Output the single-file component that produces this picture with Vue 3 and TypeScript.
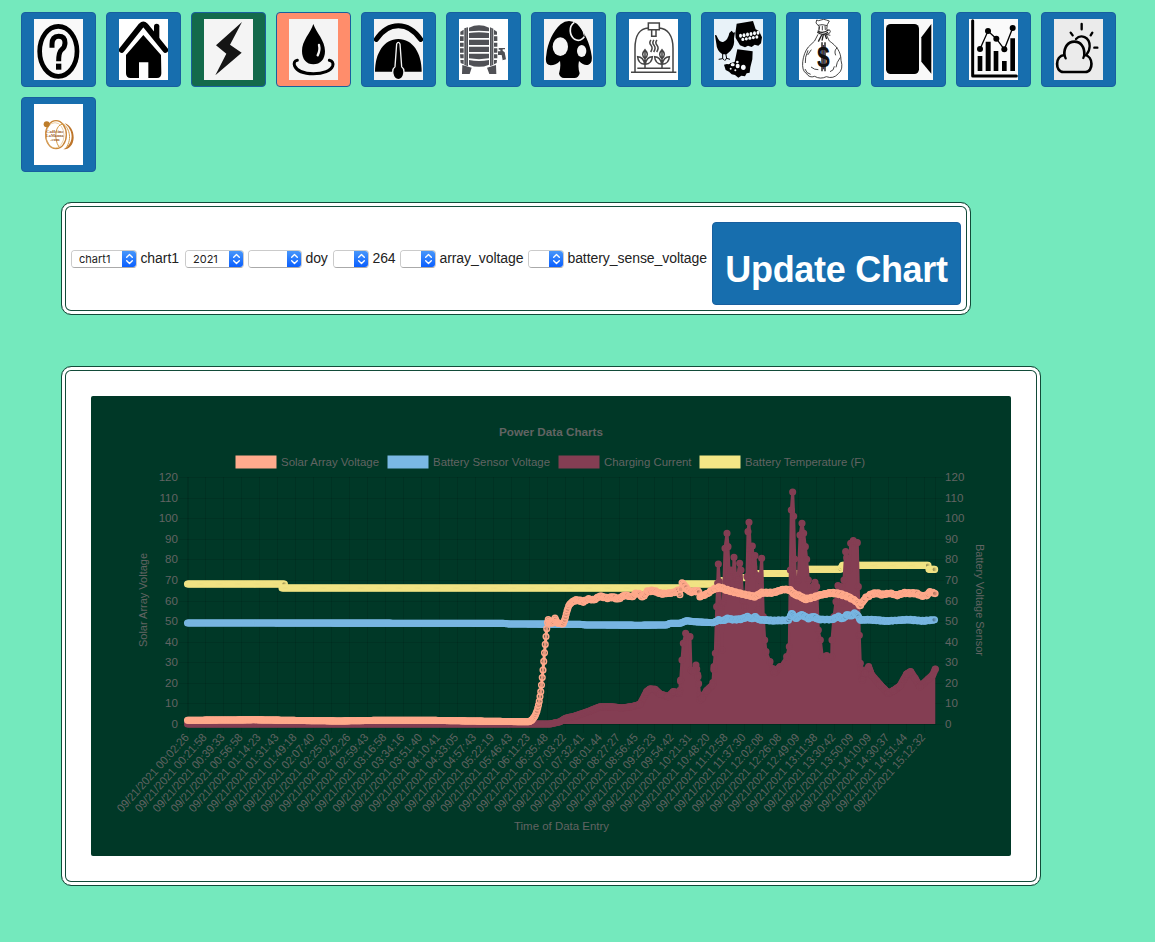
<script setup lang="ts">
type Pt = [number, number]

const tiles = ['help', 'home', 'power', 'water', 'gauge', 'barrel', 'mushroom', 'greenhouse', 'eggs', 'money', 'camera', 'stats', 'weather', 'caffeine']

const controls = [
  { value: 'chart1', size: 's66', label: 'chart1', text: 'w44' },
  { value: '2021', size: 's59', label: '', text: 'w0' },
  { value: '', size: 's54', label: 'doy', text: 'w27' },
  { value: '', size: 's36', label: '264', text: 'w27' },
  { value: '', size: 's36', label: 'array_voltage', text: 'w88' },
  { value: '', size: 's36', label: 'battery_sense_voltage', text: 'w144' },
]

const times = ['00:02:26', '00:21:58', '00:39:33', '00:56:58', '01:14:23', '01:31:43', '01:49:18', '02:07:40', '02:25:02', '02:42:26', '02:59:43', '03:16:58', '03:34:16', '03:51:40', '04:10:41', '04:33:05', '04:57:43', '05:22:19', '05:46:43', '06:11:23', '06:35:48', '07:03:22', '07:32:41', '08:01:44', '08:27:27', '08:56:45', '09:25:23', '09:54:42', '10:21:31', '10:48:20', '11:12:58', '11:37:30', '12:02:08', '12:26:08', '12:49:09', '13:11:38', '13:30:42', '13:50:09', '14:10:09', '14:30:37', '14:51:44', '15:12:32']
const ticks = times.map((t, i) => ({ label: '09/21/2021 ' + t, x: 188 + i * 17.96 }))
const levels = Array.from({ length: 13 }, (_, i) => ({ v: i * 10, y: 724 - i * 20.58 }))

const legend = [
  { name: 'Solar Array Voltage', x: 235, w: 98, c: '#ffab8d' },
  { name: 'Battery Sensor Voltage', x: 387, w: 117, c: '#7ab8e4' },
  { name: 'Charging Current', x: 558, w: 87.5, c: '#843e53' },
  { name: 'Battery Temperature (F)', x: 699, w: 120, c: '#f4e886' },
]

// Late-morning samples are stored in thirds of a pixel from (640, 470).
const fine = (list: Pt[]): Pt[] => list.map(([x, y]) => [640 + x / 3, 470 + y / 3])

const temperature: Pt[] = [
  [187.5, 584], [281, 584], [285, 584], [282, 588], [682, 588], [684, 584], [720, 584], [722, 580.5], [736, 580.5], [737, 577.6], [751, 577.6], [757, 573.5],
  [801, 573.5], [803, 569.3], [841, 569.3], [842, 565.4], [928, 565.4], [929, 569.4], [935.3, 569.4],
]
const battery: Pt[] = [
  [187.5, 623], [420, 623.2], [504, 623.4], [509, 624], [580, 624.3], [586, 625], [640, 625.2],
  ...fine([[80, 465], [90, 460], [120, 460], [140, 452], [160, 455], [220, 458], [235, 450], [250, 452], [262, 445], [280, 449], [305, 447], [323, 440], [334, 447], [346, 440], [356, 449], [400, 452], [445, 451], [456, 428], [466, 446], [485, 434], [505, 445], [522, 440], [535, 448], [575, 449], [595, 440], [608, 446], [622, 434], [635, 438], [643, 430], [652, 434], [660, 450], [690, 449], [740, 453], [805, 449], [850, 453], [886, 449]]),
]
const solar: Pt[] = [
  [187.5, 720.3], [255, 719.8], [300, 720.5], [340, 721], [385, 720.2], [430, 720.3], [470, 721], [529, 721.8], [532, 720], [535, 716], [537, 711], [539, 703], [541, 690], [543, 670], [545, 647], [547, 626],
  [548, 619], [550, 623], [553, 623], [555, 618], [557, 623], [563, 624], [565, 619], [567, 611], [569, 605], [573, 601], [578, 600], [583, 602], [588, 599], [594, 600], [600, 596], [607, 598], [613, 597], [618, 599], [625, 595], [632, 597], [636, 593],
  ...fine([[0, 373], [4, 380], [13, 377], [20, 365], [40, 362], [65, 372], [80, 370], [100, 368], [115, 361], [120, 375], [127, 335], [135, 350], [150, 366], [175, 362], [180, 380], [200, 372], [220, 358], [240, 352], [260, 360], [290, 368], [320, 375], [345, 380], [365, 368], [400, 368], [430, 358], [450, 360], [465, 374], [480, 378], [495, 388], [520, 382], [540, 375], [575, 368], [600, 372], [625, 380], [650, 395], [660, 408], [675, 385], [695, 372], [710, 369], [725, 374], [750, 370], [772, 376], [790, 369], [830, 370], [845, 378], [861, 376], [870, 365], [886, 371]]),
]
const current: Pt[] = [
  [187.5, 724], [550, 724], [560, 721.8], [565, 718.5], [575, 716], [587, 712], [600, 706.8], [612, 706.8], [622, 708], [632, 706.5],
  ...fine([[0, 703], [20, 665], [30, 657], [45, 658], [60, 672], [85, 680], [100, 665], [118, 670], [122, 630], [126, 570], [130, 520], [137, 490], [150, 500], [153, 600], [160, 605], [168, 585], [174, 620], [180, 690], [186, 685], [200, 662], [218, 645], [222, 590], [226, 550], [230, 410], [233, 340], [235, 282], [238, 335], [242, 410], [246, 540], [250, 400], [255, 235], [261, 190], [264, 230], [268, 320], [273, 300], [278, 360], [282, 262], [287, 320], [292, 330], [299, 280], [303, 300], [308, 390], [315, 410], [321, 320], [324, 185], [327, 157], [331, 240], [337, 228], [341, 290], [345, 257], [349, 315], [354, 420], [360, 330], [365, 265], [370, 440], [374, 510], [378, 545], [390, 575], [403, 608], [420, 590], [440, 560], [448, 530], [451, 300], [454, 120], [458, 66], [461, 139], [464, 267], [469, 380], [475, 330], [480, 195], [486, 160], [491, 190], [496, 230], [500, 268], [505, 330], [512, 380], [520, 348], [525, 337], [530, 350], [535, 480], [541, 510], [547, 560], [560, 557], [575, 560], [576, 510], [582, 440], [588, 395], [594, 347], [602, 350], [608, 400], [612, 330], [617, 245], [620, 263], [627, 300], [632, 220], [640, 212], [652, 218], [655, 350], [658, 496], [661, 580], [667, 630], [675, 610], [686, 590], [695, 615], [720, 644], [745, 670], [760, 662], [780, 648], [800, 612], [812, 605], [825, 625], [840, 650], [865, 627], [878, 615], [886, 597]]),
]

const line = (p: Pt[]): string => p.map(([x, y]) => x.toFixed(1) + ',' + y.toFixed(1)).join(' ')

function sample(p: Pt[], step: number): Pt[] {
  const out: Pt[] = []
  let i = 0
  for (let x = p[0][0]; x <= p[p.length - 1][0]; x += step) {
    while (i < p.length - 2 && p[i + 1][0] < x) i++
    const [x0, y0] = p[i]
    const [x1, y1] = p[i + 1]
    out.push([x, y0 + ((y1 - y0) * (x - x0)) / (x1 - x0 || 1)])
  }
  return out
}

// Sensor noise once the sun is on the panels.
const jitter = (p: Pt[], from: number, amount: number): Pt[] =>
  p.map(([x, y], i) => [x, x > from && x < 934 ? y + Math.sin(i * 2.4) * Math.cos(i * 0.83) * amount : y])

const solarDots = jitter([...sample(solar, 0.75).filter((d) => d[0] < 568), ...sample(solar, 1.05).filter((d) => d[0] >= 568)], 572, 0.9)
const batteryDots = jitter(sample(battery, 1), 716, 0.7)
const currentDots = [...sample(current, 0.95).filter((d) => d[1] > 668), ...current.slice(10)]

const area = line(current) + ' 935.3,724 187.5,724'
const series = [
  { key: 'temp', color: '#f1e384', pts: temperature, dots: [...sample(temperature.slice(0, 3), 0.95), ...sample(temperature.slice(3), 0.95)] },
  { key: 'cur', color: '#843e53', pts: current, dots: currentDots },
  { key: 'bat', color: '#78b6e2', pts: battery, dots: batteryDots },
  { key: 'sol', color: '#ffa98b', pts: solar, dots: solarDots },
]
</script>

<template>
  <main class="page">
    <nav class="tiles">
      <button v-for="t in tiles" :key="t" class="tile" :class="t" type="button">
        <svg class="pic" viewBox="0 0 147 183" preserveAspectRatio="none">
          <g v-if="t === 'help'">
            <ellipse cx="73" cy="97" rx="56" ry="75" fill="none" stroke="#000" stroke-width="14" />
            <path d="M54 86V76Q54 52 74 52Q93 52 93 72Q93 84 83 92Q74 99 74 127" fill="none" stroke="#000" stroke-width="15" />
            <rect x="66" y="134" width="16" height="18" />
          </g>
          <g v-else-if="t === 'home'">
            <path d="M8 93 66 20Q73 13 80 20L139 93" fill="none" stroke="#000" stroke-width="17" stroke-linecap="round" />
            <path d="M113 22V58" stroke="#000" stroke-width="16" stroke-linecap="round" />
            <path d="M73 48 126 108 127 163Q127 177 114 177H88V130H60V177H35Q21 177 21 163V108Z" />
          </g>
          <path v-else-if="t === 'power'" d="M114 9 36 79 67 104 34 169 113 101 78 77Z" fill="#151515" />
          <g v-else-if="t === 'water'">
            <path d="M73 15C65 42 39 64 39 96C39 121 53 136 73 136C94 136 108 121 108 96C108 64 82 42 73 15Z" />
            <path d="M90 78Q94 94 86 109" fill="none" stroke="#f4f4f4" stroke-width="7" stroke-linecap="round" />
            <path d="M25 124Q12 126 17 141C24 156 46 164 73 164C103 164 126 155 131 141Q135 127 121 124" fill="none" stroke="#000" stroke-width="9" stroke-linecap="round" />
          </g>
          <g v-else-if="t === 'gauge'">
            <path d="M7 61Q34 20 73 20T140 61" fill="none" stroke="#000" stroke-width="15" stroke-linecap="round" />
            <path d="M3 158C3 102 30 60 73 60S143 102 143 158Z" />
            <path d="M68 75Q73 65 78 75L83 143C94 151 92 179 73 182C54 179 52 151 63 143Z" stroke="#f4f4f4" stroke-width="4" />
          </g>
          <g v-else-if="t === 'barrel'" fill="#505156">
            <path d="M30 26Q60 12 90 26V37Q60 33 30 37ZM30 42Q60 37 90 42V57H30ZM30 62H90V78H30ZM30 83H90V99H30ZM30 104H90V118Q60 123 30 118ZM30 123Q60 129 90 123V137Q60 150 30 137Z" />
            <path d="M16 28 27 25V142L16 138ZM93 25 103 29V138L93 141Z" />
            <path d="M4 38 14 32V47H4ZM3 52H14V66H3ZM3 71H14V83H3ZM3 88H14V101H3ZM3 106H14V118H4ZM4 123H14V136L5 132ZM105 32 114 38V47H105ZM105 52H115V66H105ZM105 71H115V83H105ZM105 88H115V101H105ZM105 106H115V118H105ZM105 123H114L113 132 105 136Z" />
            <path d="M22 27V140M98 28V138" stroke="#a5a6aa" stroke-width="1.5" />
            <path d="M10 138 38 146 32 165H9ZM111 138 84 146 91 165H112ZM117 97H124V92H119V87H138V91H131V95L137 100 141 121 131 124 128 108H117Z" />
          </g>
          <g v-else-if="t === 'mushroom'">
            <path d="M7 108Q1 139 20 139Q35 139 48 126Q51 146 45 164Q48 176 60 177H91Q104 177 107 163Q101 146 105 126Q120 141 133 137Q146 132 143 110C138 73 120 35 99 14Q73-3 50 16C27 37 11 71 7 108Z" />
            <ellipse cx="49" cy="83" rx="23" ry="28" fill="#f4f4f4" /><ellipse cx="113" cy="96" rx="14" ry="18" fill="#f4f4f4" />
            <path d="M91 10C73 22 76 50 92 61C104 68 116 62 121 53" fill="none" stroke="#f4f4f4" stroke-width="5" />
            <path d="M98 11Q115 22 121 50" fill="none" stroke="#f4f4f4" stroke-width="3" />
          </g>
          <g v-else-if="t === 'greenhouse'" fill="none" stroke="#444" stroke-width="4.5">
            <path d="M18 158V88C18 48 34 28 58 27M90 27C115 28 132 49 132 88V158M6 160H142M25 148H124" />
            <path d="M58 12H91V32H58ZM68 34V52H81V34" />
            <path d="M66 63Q59 71 66 79T65 99M75 63Q68 71 75 79T74 99M84 63Q77 71 84 79T83 99" />
            <path v-for="x in [0, 51]" :key="x" :transform="`translate(${x} 0)`" d="M48 147V95M48 92Q34 106 48 119Q62 106 48 92ZM47 134Q43 114 26 113Q27 133 47 136M49 134Q53 114 70 113Q69 133 49 136" />
          </g>
          <g v-else-if="t === 'eggs'">
            <path d="M3 49Q7 46 10 55Q17 72 29 68Q42 63 46 42L53 35 58 41 63 40 60 58Q63 82 49 96L38 106H25Q8 94 7 74Z" />
            <path d="M26 103 26 119 14 121M26 118 31 124M35 103 38 118 48 121M38 117 33 125" fill="none" stroke="#000" stroke-width="3" />
            <path d="M68 14 117 6 125 31 135 36 144 55 141 73 133 80 122 77 113 84 102 80 93 85 78 79 65 57 64 43Z" />
            <g fill="#f7fbfd"><ellipse v-for="i in 6" :key="i" :cx="69 + i * 10.5" :cy="52 - i * 1.8" rx="4.5" ry="6" /><ellipse v-for="i in 5" :key="'b' + i" :cx="76 + i * 10.5" :cy="63 - i * 1.8" rx="4.5" ry="5" /></g>
            <path d="M70 91 116 97 115 121 109 145 107 161 98 163 93 172 82 170 73 176 63 168 53 166 45 158 35 153 30 137 62 129Z" />
            <g fill="#f7fbfd"><ellipse cx="43" cy="132" rx="5" ry="4" /><ellipse cx="56" cy="137" rx="6" ry="5" /><ellipse cx="71" cy="141" rx="6" ry="7" /><ellipse cx="88" cy="145" rx="7" ry="8" /><circle cx="50" cy="149" r="3" /><circle cx="64" cy="154" r="3" /><circle cx="70" cy="129" r="4" /></g>
          </g>
          <g v-else-if="t === 'money'" fill="none" stroke="#222" stroke-width="2.5">
            <path d="M53 3Q58 7 66 3T82 3L91 6 85 17 83 32M53 3 51 12 60 22 60 35M62 22 60 32M70 20V34M78 20 79 33M57 19Q70 14 84 20" />
            <path d="M56 35Q70 46 88 33M55 40Q71 52 87 40M77 44 83 60M68 48 58 68M73 47 69 65" stroke-width="4" />
            <path d="M84 33Q95 30 94 38T81 46L94 49M57 46Q51 67 28 84C10 105 3 155 22 163Q31 178 47 172Q64 182 82 173Q103 181 118 164Q134 151 126 124C126 98 112 80 91 66L82 47M27 94Q17 116 19 132M124 115Q112 131 111 145M115 86Q104 94 110 109M37 92 26 108M36 144Q47 153 58 152M93 158Q105 155 106 142M18 150Q22 164 35 166" />
            <text class="dollar" text-anchor="middle" transform="translate(73 145) scale(.78 1)">$</text>
            <path d="M69 70V157M78 70V157" stroke="#111" stroke-width="4" />
          </g>
          <g v-else-if="t === 'camera'"><rect x="6" y="15" width="99" height="150" rx="14" /><path d="M142 15V164L112 128V55Z" /></g>
          <g v-else-if="t === 'stats'">
            <path d="M11 5V171H142" fill="none" stroke="#000" stroke-width="9" stroke-linecap="round" stroke-linejoin="round" />
            <path d="M26 111H40V156H26ZM50 68H65V156H50ZM74 96H88V156H74ZM99 126H113V156H99ZM124 58H138V156H124Z" />
            <path d="M33 90 57 36 82 59 106 91 131 27" fill="none" stroke="#000" stroke-width="4" />
            <circle cx="33" cy="90" r="9" /><circle cx="57" cy="36" r="9" /><circle cx="82" cy="59" r="9" /><circle cx="106" cy="91" r="9" /><circle cx="131" cy="27" r="9" />
          </g>
          <g v-else-if="t === 'weather'" fill="none" stroke="#000" stroke-width="8" stroke-linecap="round">
            <path d="M66 60C80 44 107 54 107 81Q107 95 98 106" stroke-width="7" />
            <path d="M28 159C3 159 2 111 31 108C30 82 43 68 61 68C80 68 92 83 91 108C119 110 119 159 94 159Z" fill="#ebebeb" />
            <path d="M31 108 35 118M91 108 88 117" stroke-width="7" />
            <path d="M83 15V31M50 41 56 49M115 41 110 49M121 86H130" stroke-width="7" />
          </g>
          <g v-else fill="none">
            <ellipse cx="66" cy="92" rx="31" ry="42" stroke="#c98537" stroke-width="4" /><ellipse cx="63" cy="94" rx="27" ry="38" stroke="#e4bb7c" stroke-width="2" />
            <path d="M92 58C109 63 119 80 119 101C118 123 105 136 88 136C109 127 118 103 110 82Q104 67 92 58Z" fill="#bd752a" />
            <path d="M75 129C58 103 64 61 87 60C103 68 117 102 96 132" stroke="#d59a46" stroke-width="3" />
            <circle cx="38" cy="61" r="9" fill="#bd7d2a" />
            <g class="brand"><text x="36" y="86" textLength="53" lengthAdjust="spacingAndGlyphs">Caffeine</text><text x="36" y="99" textLength="53" lengthAdjust="spacingAndGlyphs">LaManna</text><text x="49" y="112" textLength="28" lengthAdjust="spacingAndGlyphs">.com</text></g>
          </g>
        </svg>
      </button>
    </nav>

    <section class="panel toolbar">
      <template v-for="(c, i) in controls" :key="i">
        <span class="picker" :class="c.size">
          <select><option>{{ c.value }}</option></select>
          <svg class="arrows" viewBox="0 0 15 18"><path d="M4.7 7.3 7.5 4.6l2.8 2.7M4.7 10.8l2.8 2.7 2.8-2.7" /></svg>
        </span>
        <span class="label" :class="c.text">{{ c.label }}</span>
      </template>
      <button class="update" type="button">Update Chart</button>
    </section>

    <section class="panel chart-panel">
      <svg class="chart" viewBox="91 396 920 460">
        <text class="title" x="499" y="436" textLength="104" lengthAdjust="spacingAndGlyphs">Power Data Charts</text>
        <g v-for="l in legend" :key="l.name">
          <rect :x="l.x + 0.5" y="455.5" width="41" height="13" :fill="l.c" />
          <text :x="l.x + 46" y="466" :textLength="l.w" lengthAdjust="spacingAndGlyphs">{{ l.name }}</text>
        </g>
        <g class="grid">
          <path v-for="l in levels" :key="l.v" :d="`M179 ${Math.round(l.y) + 0.5}H944`" />
          <path v-for="t in ticks" :key="t.label" :d="`M${Math.floor(t.x) + 0.5} 477V733`" />
          <path d="M187.5 477V724M935.5 477V724M187 724.5H936" />
        </g>
        <g v-for="l in levels" :key="l.v">
          <text x="178" :y="l.y + 4" text-anchor="end">{{ l.v }}</text>
          <text x="945" :y="l.y + 4">{{ l.v }}</text>
        </g>
        <text v-for="t in ticks" :key="t.label" text-anchor="end" textLength="101" lengthAdjust="spacingAndGlyphs" :transform="`translate(${t.x + 1.5} 738) rotate(-48)`">{{ t.label }}</text>
        <text x="0" y="0" textLength="94" lengthAdjust="spacingAndGlyphs" transform="translate(147 647) rotate(-90)">Solar Array Voltage</text>
        <text x="0" y="0" textLength="112" lengthAdjust="spacingAndGlyphs" transform="translate(976 544) rotate(90)">Battery Voltage Sensor</text>
        <text x="514" y="830" textLength="95" lengthAdjust="spacingAndGlyphs">Time of Data Entry</text>
        <g v-for="s in series" :key="s.key" :stroke="s.color">
          <polygon v-if="s.key === 'cur'" :points="area" :fill="s.color" stroke="none" />
          <polyline :points="line(s.pts)" fill="none" stroke-width="3" stroke-linejoin="round" />
          <circle v-for="(d, i) in s.dots" :key="i" :cx="d[0]" :cy="d[1]" r="2.8" stroke-width="1.5" :fill="s.key === 'cur' ? s.color : 'rgba(0,0,0,0.1)'" />
        </g>
      </svg>
    </section>
  </main>
</template>

<style>
body { margin: 0; background: #74e9bd; }
</style>

<style scoped>
.page { box-sizing: border-box; width: 1155px; height: 942px; padding: 12px 21px 0; overflow: hidden; background: #74e9bd; color: #222; font-family: "Liberation Sans", Arial, sans-serif; }
.tiles { display: flex; flex-wrap: wrap; gap: 10px; }
.tile { box-sizing: border-box; display: flex; justify-content: center; align-items: center; width: 75px; height: 75px; padding: 0; border: 1px solid #185f9f; border-radius: 4px; background: #176eae; }
.tile.power { background: #136a4b; }
.tile.water { background: #ff8d6b; }
.pic { display: block; width: 49px; height: 61px; background: #fff; }
.help .pic, .camera .pic { background: #f9f9f9; }
.power .pic, .water .pic, .gauge .pic, .mushroom .pic { background: #f4f4f4; }
.stats .pic { background: #fafafa; }
.eggs .pic { background: #e8f2f8; }
.weather .pic { background: #ebebeb; }
.dollar { font: bold 88px "Liberation Sans", Arial, sans-serif; fill: #111; stroke: none; }
.brand text { font: bold 15px "Liberation Serif", serif; fill: #a0602c; }
.panel { box-sizing: border-box; margin-left: 40px; border: 1px solid #124b39; border-radius: 10px; background: #fff; box-shadow: inset 0 0 0 3px #fff, inset 0 0 0 4px #124b39; }
.toolbar { display: flex; align-items: center; width: 910px; height: 113px; margin-top: 30px; padding: 0 9px; }
.picker { position: relative; box-sizing: border-box; flex: none; height: 18px; border: 1px solid #cbcbcb; border-bottom-color: #aaa; border-radius: 4px; overflow: hidden; margin-right: 4px; }
.s66 { width: 66px; } .s59 { width: 59px; } .s54 { width: 54px; } .s36 { width: 36px; }
.picker select { display: block; width: 100%; height: 16px; padding: 0 15px 0 7px; border: 0; background: #fff; color: #222; font: 11px/16px Inter, sans-serif; appearance: none; }
.arrows { position: absolute; top: -1px; right: -1px; width: 15px; height: 18px; background: linear-gradient(#4b9afa, #065bff); }
.arrows path { fill: none; stroke: #fff; stroke-width: 1.4; stroke-linecap: round; stroke-linejoin: round; }
.label { flex: none; height: 19px; font-size: 14px; line-height: 18px; letter-spacing: -.06px; text-indent: -.6px; white-space: nowrap; }
.w44 { width: 44px; } .w0 { width: 0; } .w27 { width: 27px; } .w88 { width: 88px; } .w144 { width: 144px; }
.update { box-sizing: border-box; flex: none; width: 249px; height: 83px; margin-top: 10px; padding: 12px 0 0; border: 1px solid #185f9f; border-radius: 4px; background: #176eae; color: #fff; font: bold 36px/40px "Liberation Sans", Arial, sans-serif; letter-spacing: -.3px; white-space: nowrap; }
.chart-panel { width: 980px; height: 520px; margin-top: 51px; padding: 29px; }
.chart { display: block; width: 920px; height: 460px; border-radius: 2px; background: #003827; }
.chart text { font: 11.6px "Liberation Sans", Arial, sans-serif; fill: #626463; }
.chart text.title { font-weight: bold; }
.grid path { fill: none; stroke: rgba(0, 0, 0, .1); stroke-width: 1; }
</style>
